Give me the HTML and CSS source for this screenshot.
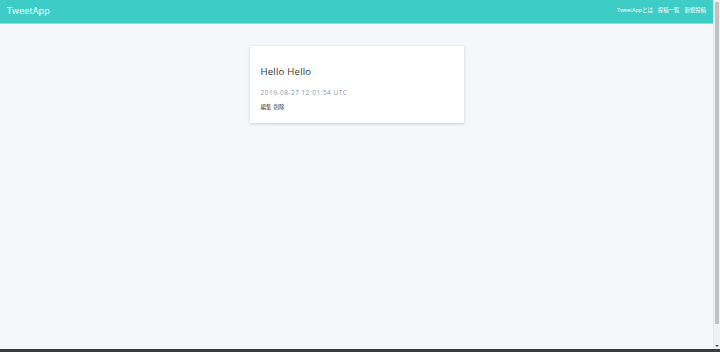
FILE: index.html
```html
<!DOCTYPE html>
<html lang="ja">
<head>
  <meta charset="utf-8">
  <title>TweetApp</title>
  <link rel="stylesheet" href="styles.css">
</head>
<body>
  <div class="screen">
    <div class="page">
      <header>
        <div class="header-logo">TweetApp</div>
        <ul class="header-menus">
          <li><a href="#">TweetAppとは</a></li>
          <li><a href="#">投稿一覧</a></li>
          <li><a href="#">新規投稿</a></li>
        </ul>
      </header>
      <div class="main">
        <div class="posts-container">
          <div class="posts-show-item">
            <p class="post-content">Hello Hello</p>
            <div class="post-time">2019-08-27 12:01:54 UTC</div>
            <div class="post-menus">
              <a href="#">編集</a>
              <a href="#">削除</a>
            </div>
          </div>
        </div>
      </div>
    </div>
    <div class="scrollbar">
      <div class="scroll-thumb"></div>
      <div class="scroll-arrow"></div>
    </div>
  </div>
  <div class="taskbar"></div>
</body>
</html>
```

FILE: styles.css
```css
* { margin:0; padding:0; box-sizing:border-box; }
html, body { height:100%; overflow:hidden; }
body {
  font-family:'Open Sans','Noto Sans CJK JP',sans-serif;
  background:#f5f8fa;
  color:#2c3e50;
  display:flex;
  flex-direction:column;
}
a { text-decoration:none; color:inherit; }
ul { list-style:none; }

.screen { flex:1; display:flex; min-height:0; }
.page { flex:1; display:flex; flex-direction:column; }

header {
  height:24px;
  background:#3ecdc6;
  border-bottom:1px solid #8fe0dc;
  display:flex;
  align-items:center;
  justify-content:space-between;
  padding:0 7px 2px;
}
.header-logo {
  color:#fff;
  font-size:9px;
  line-height:1;
  letter-spacing:0.1px;
}
.header-menus {
  display:flex;
  gap:5px;
  font-size:5.4px;
  line-height:1;
  color:#fff;
}

.main { flex:1; padding-top:22px; }
.posts-container { display:flex; justify-content:center; }
.posts-show-item {
  width:214px;
  height:77px;
  background:#fff;
  box-shadow:0 1px 3px rgba(0,0,0,0.18);
  padding:19px 11px 0;
}
.post-content {
  font-size:9.6px;
  color:#333;
  letter-spacing:0.2px;
}
.post-time {
  margin-top:10px;
  font-size:6.5px;
  color:#8899a6;
  letter-spacing:0.5px;
}
.post-menus {
  margin-top:6px;
  font-size:5.5px;
  color:#333;
  display:flex;
  gap:2px;
}

.scrollbar {
  width:7px;
  background:#f1f1f1;
  display:flex;
  flex-direction:column;
  border-left:1px solid #e6e6e6;
}
.scroll-thumb { height:322px; background:#c1c1c1; margin:2px 1px 0; }
.scroll-arrow {
  margin:auto 1px 2px;
  width:0; height:0;
  border-left:2px solid transparent;
  border-right:2px solid transparent;
  border-top:2px solid #505050;
}
.taskbar { height:3px; background:#3a3a3a; }
```
